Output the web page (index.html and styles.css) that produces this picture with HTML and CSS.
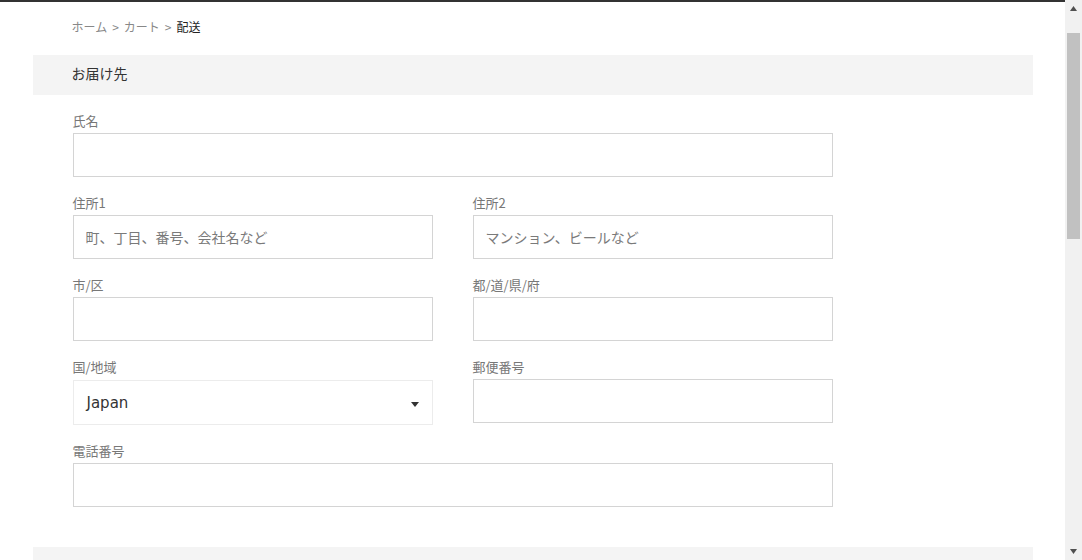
FILE: index.html
```html
<!DOCTYPE html>
<html lang="ja">
<head>
<meta charset="utf-8">
<title>配送</title>
<link rel="stylesheet" href="styles.css">
</head>
<body>
<div class="page">
  <div class="topbar"></div>
  <main class="container">
    <nav class="breadcrumb">
      <a class="crumb" href="#">ホーム</a><span class="sep">&gt;</span><a class="crumb" href="#">カート</a><span class="sep">&gt;</span><span class="current">配送</span>
    </nav>

    <section class="section">
      <h2 class="section-title">お届け先</h2>
      <form class="form">
        <div class="field">
          <label class="label">氏名</label>
          <input class="input" type="text">
        </div>
        <div class="row">
          <div class="field">
            <label class="label">住所1</label>
            <input class="input" type="text" placeholder="町、丁目、番号、会社名など">
          </div>
          <div class="field">
            <label class="label">住所2</label>
            <input class="input" type="text" placeholder="マンション、ビールなど">
          </div>
        </div>
        <div class="row">
          <div class="field">
            <label class="label">市/区</label>
            <input class="input" type="text">
          </div>
          <div class="field">
            <label class="label">都/道/県/府</label>
            <input class="input" type="text">
          </div>
        </div>
        <div class="row">
          <div class="field">
            <label class="label">国/地域</label>
            <div class="select">
              <span class="select-value">Japan</span>
              <svg class="caret" width="8" height="5" viewBox="0 0 8 5"><path d="M0 0H8L4 5Z" fill="#333"/></svg>
            </div>
          </div>
          <div class="field">
            <label class="label">郵便番号</label>
            <input class="input" type="text">
          </div>
        </div>
        <div class="field">
          <label class="label">電話番号</label>
          <input class="input" type="text">
        </div>
      </form>
    </section>

    <section class="section next"></section>
  </main>
</div>

<div class="scrollbar" aria-hidden="true">
  <svg class="sb-arrow" width="7" height="5" viewBox="0 0 7 5"><path d="M3.5 0L7 5H0Z" fill="#505050"/></svg>
  <div class="sb-track"><div class="sb-thumb"></div></div>
  <svg class="sb-arrow" width="7" height="5" viewBox="0 0 7 5"><path d="M0 0H7L3.5 5Z" fill="#505050"/></svg>
</div>
</body>
</html>
```
FILE: styles.css
```css
html, body {
  margin: 0;
  padding: 0;
  background: #fff;
}
body {
  font-family: "Noto Sans CJK JP", "Noto Sans", sans-serif;
  color: #333;
  padding-right: 17px;
}
.page {
  width: 100%;
}
.topbar {
  height: 2px;
  background: #333;
}
.container {
  max-width: 1000px;
  margin: 0 auto;
}
.breadcrumb {
  padding: 15px 39px 18px;
  font-size: 12px;
  line-height: 20px;
  color: #888;
}
.crumb {
  color: #888;
  text-decoration: none;
}
.sep {
  margin: 0 5px;
}
.current {
  color: #222;
}
.section {
  margin: 0;
}
.section.next {
  height: 890px;
  background: #f4f4f4;
}
.section-title {
  margin: 0;
  height: 36px;
  line-height: 36px;
  padding: 0 39px 4px;
  background: #f4f4f4;
  font-size: 14px;
  font-weight: normal;
  color: #333;
}
.form {
  padding: 18px 40px 22px;
  max-width: 760px;
}
.row {
  display: grid;
  grid-template-columns: 360px 360px;
  column-gap: 40px;
}
.field {
  display: flex;
  flex-direction: column;
  margin-bottom: 18px;
}
.label {
  font-size: 13px;
  line-height: 16px;
  margin-bottom: 4px;
  color: #777;
}
.input {
  box-sizing: border-box;
  height: 44px;
  width: 100%;
  margin: 0;
  border: 1px solid #d4d4d4;
  border-radius: 0;
  padding: 0 12px;
  font-family: "Noto Sans CJK JP", "Noto Sans", sans-serif;
  font-size: 14px;
  color: #333;
  background: #fff;
  outline: none;
}
.input::placeholder {
  color: #7a7a7a;
}
.select {
  box-sizing: border-box;
  margin-top: 1px;
  height: 45px;
  border: 1px solid #ececec;
  display: flex;
  align-items: center;
  justify-content: space-between;
  padding: 0 13px;
}
.select-value {
  font-family: "DejaVu Sans", sans-serif;
  font-size: 15px;
  color: #333;
}
.caret {
  display: block;
  margin-top: 3px;
}
.scrollbar {
  position: fixed;
  top: 0;
  right: 0;
  bottom: 0;
  width: 17px;
  background: #f1f1f1;
  display: flex;
  flex-direction: column;
  align-items: center;
}
.sb-arrow {
  display: block;
  flex: none;
  margin: 6px 0;
}
.sb-track {
  flex: 1;
  width: 100%;
  padding-top: 16px;
  box-sizing: border-box;
}
.sb-thumb {
  margin: 0 2px;
  height: 206px;
  background: #c1c1c1;
}
```
